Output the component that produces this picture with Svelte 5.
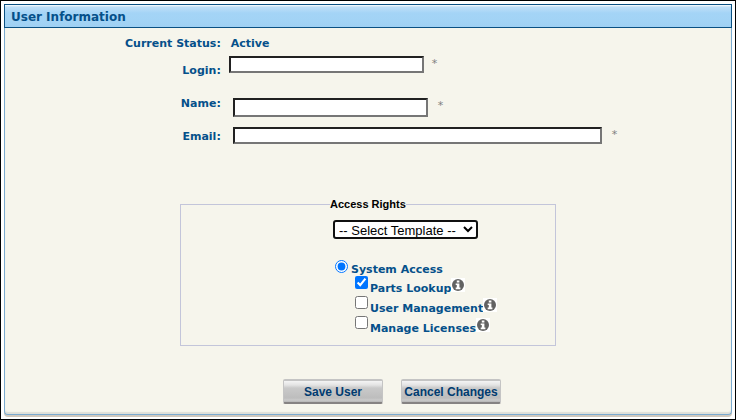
<script>
  const templates = ['-- Select Template --', 'Administrator', 'Standard User'];

  let login = $state('');
  let name = $state('');
  let email = $state('');
  let template = $state(templates[0]);
  let access = $state('system');

  let rights = $state([
    { id: 'parts', label: 'Parts Lookup', checked: true },
    { id: 'users', label: 'User Management', checked: false },
    { id: 'licenses', label: 'Manage Licenses', checked: false },
  ]);
</script>

<div class="frame">
  <form class="panel" onsubmit={(e) => e.preventDefault()}>
    <h1 class="title">User Information</h1>

    <div class="body">
      <div class="row status">
        <span class="label">Current Status:</span>
        <span class="value">Active</span>
      </div>
      <div class="row login">
        <label class="label" for="login">Login:</label>
        <div class="field"><input id="login" type="text" bind:value={login} /><span class="req">*</span></div>
      </div>
      <div class="row name">
        <label class="label" for="name">Name:</label>
        <div class="field"><input id="name" type="text" bind:value={name} /><span class="req">*</span></div>
      </div>
      <div class="row email">
        <label class="label" for="email">Email:</label>
        <div class="field"><input id="email" class="wide" type="text" bind:value={email} /><span class="req">*</span></div>
      </div>

      <fieldset>
        <legend>Access Rights</legend>
        <select aria-label="Template" bind:value={template}>
          {#each templates as t}
            <option value={t}>{t}</option>
          {/each}
        </select>

        <div class="option radio">
          <input id="system" type="radio" name="access" value="system" bind:group={access} />
          <label for="system">System Access</label>
        </div>
        {#each rights as right (right.id)}
          <div class="option right">
            <input id={right.id} type="checkbox" bind:checked={right.checked} />
            <label for={right.id}>{right.label}</label>
            <svg class="info" viewBox="0 0 14 14" aria-hidden="true">
              <circle cx="7" cy="7" r="6" />
              <path d="M5.8 2.4h2.6v2.2H5.8z M4.7 5.5h3.7v4.1h1v1.6H4.7V9.6h1.1V7.1H4.7z" />
            </svg>
          </div>
        {/each}
      </fieldset>

      <div class="actions">
        <button type="submit">Save User</button>
        <button type="button">Cancel Changes</button>
      </div>
    </div>
  </form>
</div>

<style>
  .frame {
    box-sizing: border-box;
    border: 1px solid #000;
    padding: 3px 3px 4px;
    background: #fff;
  }
  .panel {
    font: bold 11px/16px Verdana, "DejaVu Sans", sans-serif;
    color: #05508a;
  }
  .title {
    margin: 0;
    padding: 2px 6px 0;
    border: 1px solid #0a5082;
    font-size: 12px;
    line-height: 20px;
    background: linear-gradient(#fff 0, #bfdff8 2px, #a4d4f6 8px, #a2d3f5 16px, #9fd0f3 100%);
  }
  .body {
    border: 1px solid #7aaacf;
    border-top: 0;
    border-radius: 0 0 4px 4px;
    padding: 8px 0 10px;
    background: #f6f5ec;
    box-shadow: inset 0 -2px 1px #dedfd8, 0 2px 0 #cfc8bd;
  }

  .row {
    display: grid;
    grid-template-columns: 30% 1fr;
    column-gap: 10px;
  }
  .label { text-align: right; margin-right: 2px; }
  .status { column-gap: 8px; }
  .login { height: 42px; column-gap: 6px; padding-top: 4px; }
  .login .label { padding-top: 7px; }
  .name { height: 29px; }
  .name .label { margin-top: -2px; }
  .email .label { padding-top: 2px; }
  .field {
    display: flex;
    align-items: flex-start;
    gap: 10px;
  }
  .login .field { gap: 8px; }
  .field input {
    box-sizing: border-box;
    width: 195px;
    height: 17px;
    padding: 0 2px;
    border: 2px solid;
    border-color: #212121 #767676 #767676 #212121;
    background: #fff;
    font: 12px "Liberation Sans", Arial, sans-serif;
  }
  .name .field input { height: 19px; }
  .field .wide { width: 369px; }
  .req { font-weight: normal; color: #808080; }

  fieldset {
    box-sizing: border-box;
    width: 376px;
    max-width: 100%;
    margin: 52px auto 0;
    padding: 9px 0 9px 152px;
    border: 1px solid #c3c5da;
  }
  legend {
    margin-left: -3px;
    padding: 0;
    font: bold 11px/14px "Liberation Sans", Arial, sans-serif;
    color: #000;
  }
  select {
    display: block;
    width: 145px;
    height: 19px;
    margin-bottom: 21px;
    padding: 0;
    border: 2px solid #101010;
    border-radius: 3px;
    background: #fff;
    font: 13px "Liberation Sans", Arial, sans-serif;
    color: #000;
  }
  .option {
    display: flex;
    align-items: flex-start;
    height: 20px;
  }
  .option input { width: 13px; height: 13px; margin: 0; }
  .option label { padding-top: 5px; }
  .radio { height: 16px; padding-left: 2px; gap: 3px; }
  .radio label { padding-top: 2px; }
  .right { padding-left: 22px; gap: 2px; }
  .info {
    width: 14px;
    height: 14px;
    margin: 2px 0 0 -2px;
    background: #fff;
  }
  .info circle { fill: #626262; }
  .info path { fill: #fff; }

  .actions {
    display: flex;
    justify-content: center;
    gap: 18px;
    margin-top: 33px;
    padding-left: 48px;
  }
  button {
    width: 100px;
    height: 25px;
    padding: 0;
    border: 1px solid #c4c4c4;
    border-top-width: 2px;
    border-bottom: 2px solid #858282;
    border-radius: 2px;
    background: linear-gradient(#f4f4f4 0, #e4e4e4 4px, #c9c9c9 7px, #bdbdbd 17px, #cacaca 19px, #b5b5b5 100%);
    font: bold 12px/20px "Liberation Sans", Arial, sans-serif;
    color: #003b70;
    white-space: nowrap;
  }
</style>
